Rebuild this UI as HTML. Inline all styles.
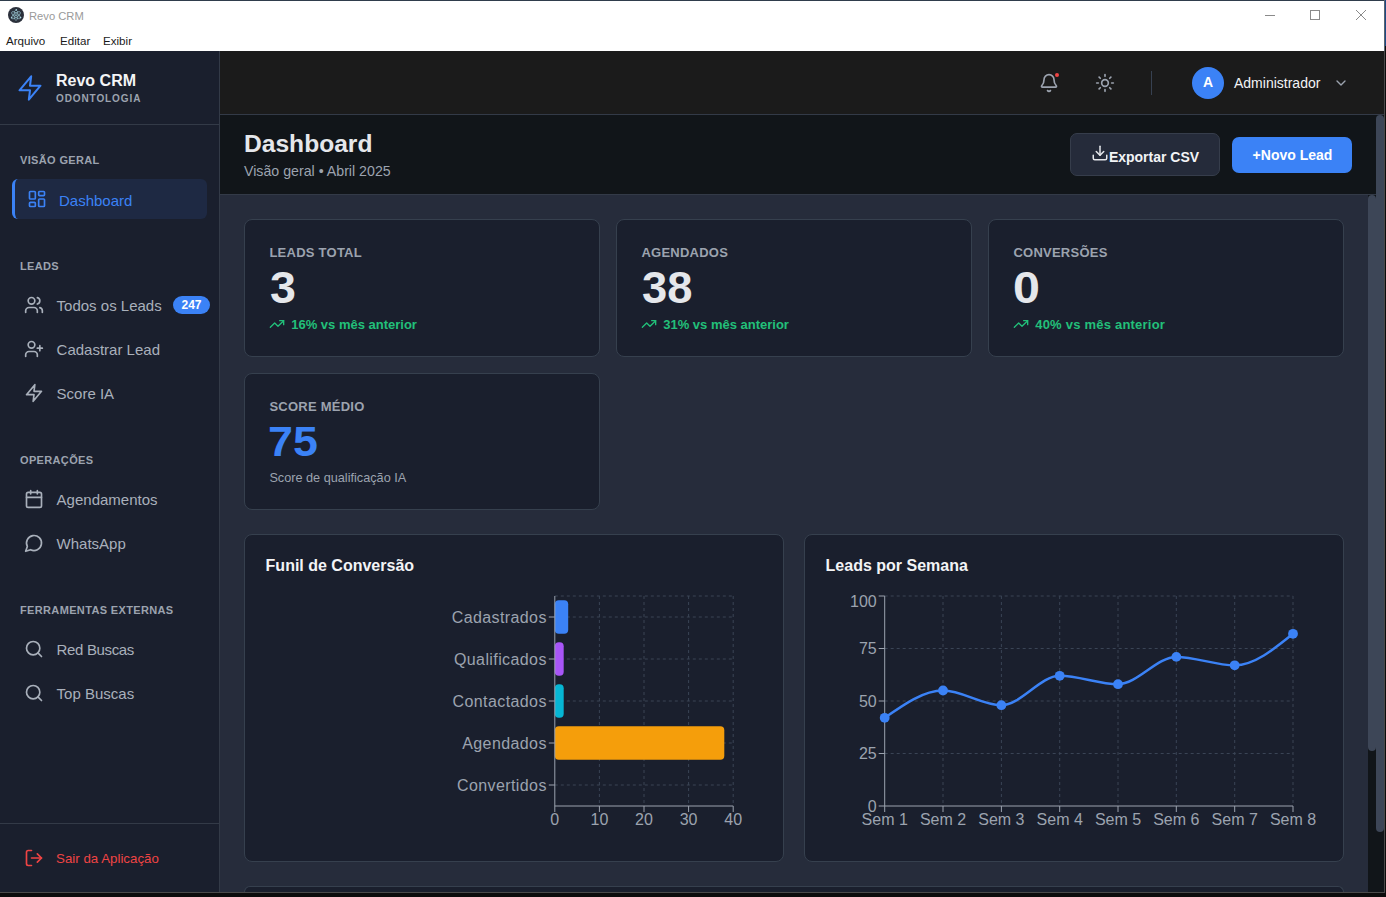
<!DOCTYPE html>
<html><head><meta charset="utf-8"><title>Revo CRM</title>
<style>
html,body{margin:0;padding:0;width:1386px;height:897px;overflow:hidden;background:#0c0c0c;font-family:"Liberation Sans", sans-serif;}
.t{position:absolute;white-space:nowrap;line-height:1;}
.r{position:absolute;}
.ic{position:absolute;overflow:visible;}
</style></head><body>
<div class="r" style="left:0px;top:0px;width:1386px;height:1px;background:#2f3d4c"></div>
<div class="r" style="left:0px;top:1px;width:1384px;height:50px;background:#ffffff"></div>
<div class="r" style="left:1384px;top:0px;width:1px;height:51px;background:#5a6470"></div>
<div class="r" style="left:1385px;top:0px;width:1px;height:46px;background:#1c4a85"></div>
<div class="r" style="left:1385px;top:46px;width:1px;height:5px;background:#0c0c0c"></div>
<svg class="ic" style="left:7px;top:6px" width="18" height="18" viewBox="0 0 18 18"><circle cx="9" cy="9" r="8" fill="#2b303b"/><g fill="none" stroke="#8fb8c4" stroke-width="0.75"><ellipse cx="9" cy="9.2" rx="5.2" ry="2" transform="rotate(35 9 9.2)"/><ellipse cx="9" cy="9.2" rx="5.2" ry="2" transform="rotate(-35 9 9.2)"/><ellipse cx="9" cy="9.2" rx="5.2" ry="2" transform="rotate(90 9 9.2)"/></g><circle cx="9" cy="9.2" r="0.9" fill="#8fb8c4"/><circle cx="9.3" cy="3.8" r="0.8" fill="#b0dde8"/><circle cx="4.6" cy="11.8" r="0.8" fill="#b0dde8"/><circle cx="13.6" cy="11.6" r="0.8" fill="#b0dde8"/></svg>
<div class="t" style="left:29px;top:10.92px;font-size:11.2px;color:#9a9a9a;">Revo CRM</div>
<div class="t" style="left:6px;top:35.38px;font-size:11.6px;color:#1a1a1a;">Arquivo</div>
<div class="t" style="left:60px;top:35.38px;font-size:11.6px;color:#1a1a1a;">Editar</div>
<div class="t" style="left:103px;top:35.38px;font-size:11.6px;color:#1a1a1a;">Exibir</div>
<div class="r" style="left:1265px;top:15px;width:10px;height:1px;background:#8a8a8a"></div>
<div class="r" style="left:1310px;top:10px;width:10px;height:10px;border:1px solid #8a8a8a;box-sizing:border-box"></div>
<svg class="ic" style="left:1356px;top:10px" width="10" height="10" viewBox="0 0 10 10"><path d="M0 0L10 10M10 0L0 10" stroke="#8a8a8a" stroke-width="1"/></svg>
<div class="r" style="left:0px;top:51px;width:1384px;height:841px;background:#262c3b"></div>
<div class="r" style="left:1384px;top:51px;width:1px;height:842px;background:#4a4a4a"></div>
<div class="r" style="left:1385px;top:51px;width:1px;height:846px;background:#0c0c0c"></div>
<div class="r" style="left:0px;top:892px;width:1385px;height:1px;background:#4a4a4a"></div>
<div class="r" style="left:0px;top:893px;width:1386px;height:4px;background:#0c0c0c"></div>
<div class="r" style="left:0px;top:51px;width:219px;height:841px;background:#1a1f2d"></div>
<div class="r" style="left:219px;top:51px;width:1px;height:841px;background:#333a47"></div>
<div class="r" style="left:0px;top:124px;width:219px;height:1px;background:#333a47"></div>
<div class="r" style="left:0px;top:823px;width:219px;height:1px;background:#333a47"></div>
<svg class="ic" style="left:15.7px;top:73.8px" width="28" height="28" viewBox="0 0 24 24" fill="none" stroke="#3b82f6" stroke-width="1.75" stroke-linecap="round" stroke-linejoin="round"><polygon points="13 2 3 14 12 14 11 22 21 10 12 10 13 2"/></svg>
<div class="t" style="left:56px;top:73.46px;font-size:16px;color:#f3f4f6;font-weight:700;">Revo CRM</div>
<div class="t" style="left:56px;top:94.44px;font-size:10px;color:#9ca3af;font-weight:700;letter-spacing:0.9px;">ODONTOLOGIA</div>
<div class="t" style="left:20px;top:155.09px;font-size:11px;color:#9ca3af;font-weight:700;letter-spacing:0.35px;">VISÃO GERAL</div>
<div class="t" style="left:20px;top:260.69px;font-size:11px;color:#9ca3af;font-weight:700;letter-spacing:0.35px;">LEADS</div>
<div class="t" style="left:20px;top:454.69px;font-size:11px;color:#9ca3af;font-weight:700;letter-spacing:0.35px;">OPERAÇÕES</div>
<div class="t" style="left:20px;top:604.69px;font-size:11px;color:#9ca3af;font-weight:700;letter-spacing:0.35px;">FERRAMENTAS EXTERNAS</div>
<div class="r" style="left:12px;top:179px;width:195px;height:40px;background:#1e2943;border-radius:6px;border-left:3px solid #3b82f6;box-sizing:border-box"></div>
<svg class="ic" style="left:27px;top:189.3px" width="20" height="20" viewBox="0 0 24 24" fill="none" stroke="#3b82f6" stroke-width="2" stroke-linecap="round" stroke-linejoin="round"><rect width="7" height="9" x="3" y="3" rx="1"/><rect width="7" height="5" x="14" y="3" rx="1"/><rect width="7" height="9" x="14" y="12" rx="1"/><rect width="7" height="5" x="3" y="16" rx="1"/></svg>
<div class="t" style="left:59px;top:192.60px;font-size:15px;color:#3b82f6;">Dashboard</div>
<svg class="ic" style="left:24px;top:294.7px" width="20" height="20" viewBox="0 0 24 24" fill="none" stroke="#a9b0bb" stroke-width="2" stroke-linecap="round" stroke-linejoin="round"><path d="M16 21v-2a4 4 0 0 0-4-4H6a4 4 0 0 0-4 4v2"/><circle cx="9" cy="7" r="4"/><path d="M22 21v-2a4 4 0 0 0-3-3.87"/><path d="M16 3.13a4 4 0 0 1 0 7.75"/></svg>
<div class="t" style="left:56.6px;top:298.30px;font-size:15px;color:#a9b0bb;">Todos os Leads</div>
<svg class="ic" style="left:24px;top:338.9px" width="20" height="20" viewBox="0 0 24 24" fill="none" stroke="#a9b0bb" stroke-width="2" stroke-linecap="round" stroke-linejoin="round"><path d="M16 21v-2a4 4 0 0 0-4-4H6a4 4 0 0 0-4 4v2"/><circle cx="9" cy="7" r="4"/><line x1="19" x2="19" y1="8" y2="14"/><line x1="22" x2="16" y1="11" y2="11"/></svg>
<div class="t" style="left:56.6px;top:342.30px;font-size:15px;color:#a9b0bb;">Cadastrar Lead</div>
<svg class="ic" style="left:24px;top:383.4px" width="20" height="20" viewBox="0 0 24 24" fill="none" stroke="#a9b0bb" stroke-width="2" stroke-linecap="round" stroke-linejoin="round"><polygon points="13 2 3 14 12 14 11 22 21 10 12 10 13 2"/></svg>
<div class="t" style="left:56.6px;top:386.30px;font-size:15px;color:#a9b0bb;">Score IA</div>
<svg class="ic" style="left:24px;top:489.2px" width="20" height="20" viewBox="0 0 24 24" fill="none" stroke="#a9b0bb" stroke-width="2" stroke-linecap="round" stroke-linejoin="round"><path d="M8 2v4"/><path d="M16 2v4"/><rect width="18" height="18" x="3" y="4" rx="2"/><path d="M3 10h18"/></svg>
<div class="t" style="left:56.6px;top:492.30px;font-size:15px;color:#a9b0bb;">Agendamentos</div>
<svg class="ic" style="left:24px;top:533.0px" width="20" height="20" viewBox="0 0 24 24" fill="none" stroke="#a9b0bb" stroke-width="2" stroke-linecap="round" stroke-linejoin="round"><path d="M7.9 20A9 9 0 1 0 4 16.1L2 22Z"/></svg>
<div class="t" style="left:56.6px;top:536.30px;font-size:15px;color:#a9b0bb;">WhatsApp</div>
<svg class="ic" style="left:24px;top:639.2px" width="20" height="20" viewBox="0 0 24 24" fill="none" stroke="#a9b0bb" stroke-width="2" stroke-linecap="round" stroke-linejoin="round"><circle cx="11" cy="11" r="8"/><path d="m21 21-4.3-4.3"/></svg>
<div class="t" style="left:56.6px;top:642.30px;font-size:15px;color:#a9b0bb;letter-spacing:-0.35px;">Red Buscas</div>
<svg class="ic" style="left:24px;top:683.2px" width="20" height="20" viewBox="0 0 24 24" fill="none" stroke="#a9b0bb" stroke-width="2" stroke-linecap="round" stroke-linejoin="round"><circle cx="11" cy="11" r="8"/><path d="m21 21-4.3-4.3"/></svg>
<div class="t" style="left:56.6px;top:686.30px;font-size:15px;color:#a9b0bb;">Top Buscas</div>
<div class="r" style="left:173px;top:296px;width:37px;height:18px;background:#3b82f6;border-radius:9px"></div>
<div class="t" style="left:191.5px;top:298.84px;font-size:12px;color:#ffffff;font-weight:700;transform:translateX(-50%);">247</div>
<svg class="ic" style="left:24px;top:847.9px" width="20" height="20" viewBox="0 0 24 24" fill="none" stroke="#ef4444" stroke-width="2" stroke-linecap="round" stroke-linejoin="round"><path d="M9 21H5a2 2 0 0 1-2-2V5a2 2 0 0 1 2-2h4"/><polyline points="16 17 21 12 16 7"/><line x1="21" x2="9" y1="12" y2="12"/></svg>
<div class="t" style="left:56.1px;top:851.74px;font-size:13.3px;color:#ef4444;">Sair da Aplicação</div>
<div class="r" style="left:220px;top:51px;width:1164px;height:63px;background:#1b1b1b"></div>
<div class="r" style="left:220px;top:114px;width:1164px;height:1px;background:#333a47"></div>
<svg class="ic" style="left:1039px;top:72.7px" width="20" height="20" viewBox="0 0 24 24" fill="none" stroke="#9ca3af" stroke-width="2" stroke-linecap="round" stroke-linejoin="round"><path d="M10.268 21a2 2 0 0 0 3.464 0"/><path d="M3.262 15.326A1 1 0 0 0 4 17h16a1 1 0 0 0 .74-1.673C19.41 13.956 18 12.499 18 8A6 6 0 0 0 6 8c0 4.499-1.411 5.956-2.738 7.326"/></svg>
<div class="r" style="left:1055px;top:73px;width:4.2px;height:4.2px;background:#ef4444;border-radius:50%"></div>
<svg class="ic" style="left:1095px;top:73px" width="20" height="20" viewBox="0 0 24 24" fill="none" stroke="#9ca3af" stroke-width="2" stroke-linecap="round" stroke-linejoin="round"><circle cx="12" cy="12" r="4"/><path d="M12 2v2"/><path d="M12 20v2"/><path d="m4.93 4.93 1.41 1.41"/><path d="m17.66 17.66 1.41 1.41"/><path d="M2 12h2"/><path d="M20 12h2"/><path d="m6.34 17.66-1.41 1.41"/><path d="m19.07 4.93-1.41 1.41"/></svg>
<div class="r" style="left:1151px;top:71px;width:1px;height:24px;background:#374151"></div>
<div class="r" style="left:1192px;top:67px;width:32px;height:32px;background:#3b82f6;border-radius:50%"></div>
<div class="t" style="left:1208px;top:75.15px;font-size:14px;color:#ffffff;font-weight:700;transform:translateX(-50%);">A</div>
<div class="t" style="left:1234px;top:76.15px;font-size:14px;color:#f3f4f6;">Administrador</div>
<svg class="ic" style="left:1333px;top:75px" width="16" height="16" viewBox="0 0 24 24" fill="none" stroke="#9ca3af" stroke-width="2" stroke-linecap="round" stroke-linejoin="round"><path d="m6 9 6 6 6-6"/></svg>
<div class="r" style="left:220px;top:115px;width:1156px;height:79px;background:#111519"></div>
<div class="r" style="left:220px;top:194px;width:1156px;height:1px;background:#333a47"></div>
<div class="t" style="left:244px;top:131.58px;font-size:24.6px;color:#e5e7eb;font-weight:700;">Dashboard</div>
<div class="t" style="left:244px;top:163.88px;font-size:14.2px;color:#9ca3af;">Visão geral • Abril 2025</div>
<div class="r" style="left:1070px;top:133px;width:150px;height:43px;background:#252b3a;border:1px solid #363d4b;border-radius:7px;box-sizing:border-box"></div>
<svg class="ic" style="left:1090.9px;top:143.7px" width="18" height="18" viewBox="0 0 24 24" fill="none" stroke="#e5e7eb" stroke-width="2" stroke-linecap="round" stroke-linejoin="round"><path d="M21 15v4a2 2 0 0 1-2 2H5a2 2 0 0 1-2-2v-4"/><polyline points="7 10 12 15 17 10"/><line x1="12" x2="12" y1="15" y2="3"/></svg>
<div class="t" style="left:1108.9px;top:149.95px;font-size:14px;color:#f3f4f6;font-weight:700;">Exportar CSV</div>
<div class="r" style="left:1232px;top:137px;width:120px;height:36px;background:#3b82f6;border-radius:7px"></div>
<div class="t" style="left:1252.6px;top:148.15px;font-size:14px;color:#ffffff;font-weight:700;">+Novo Lead</div>
<div class="r" style="left:1368px;top:195px;width:8px;height:697px;background:#111519"></div>
<div class="r" style="left:1368px;top:195px;width:8px;height:556px;background:#3d4657;border-radius:4px"></div>
<div class="r" style="left:1376px;top:115px;width:8px;height:777px;background:#111519"></div>
<div class="r" style="left:1376px;top:115px;width:8px;height:717px;background:#3d4657;border-radius:4px"></div>
<div class="r" style="left:244px;top:219px;width:356px;height:138px;background:#1a1f2d;border:1px solid #36404e;border-radius:8px;box-sizing:border-box"></div>
<div class="t" style="left:269.4px;top:246.00px;font-size:13px;color:#9ca3af;font-weight:700;letter-spacing:0.25px;">LEADS TOTAL</div>
<div class="t" style="left:269.5px;top:265.75px;font-size:44px;color:#e5e7eb;font-weight:700;transform:scaleX(1.06);transform-origin:0 0;">3</div>
<svg class="ic" style="left:269px;top:316px" width="16" height="16" viewBox="0 0 24 24" fill="none" stroke="#22c07a" stroke-width="2" stroke-linecap="round" stroke-linejoin="round"><polyline points="22 7 13.5 15.5 8.5 10.5 2 17"/><polyline points="16 7 22 7 22 13"/></svg>
<div class="t" style="left:291.2px;top:318.00px;font-size:13px;color:#22c07a;font-weight:700;">16% vs mês anterior</div>
<div class="r" style="left:616px;top:219px;width:356px;height:138px;background:#1a1f2d;border:1px solid #36404e;border-radius:8px;box-sizing:border-box"></div>
<div class="t" style="left:641.4px;top:246.00px;font-size:13px;color:#9ca3af;font-weight:700;letter-spacing:0.25px;">AGENDADOS</div>
<div class="t" style="left:641.5px;top:265.75px;font-size:44px;color:#e5e7eb;font-weight:700;transform:scaleX(1.03);transform-origin:0 0;">38</div>
<svg class="ic" style="left:641px;top:316px" width="16" height="16" viewBox="0 0 24 24" fill="none" stroke="#22c07a" stroke-width="2" stroke-linecap="round" stroke-linejoin="round"><polyline points="22 7 13.5 15.5 8.5 10.5 2 17"/><polyline points="16 7 22 7 22 13"/></svg>
<div class="t" style="left:663.2px;top:318.00px;font-size:13px;color:#22c07a;font-weight:700;">31% vs mês anterior</div>
<div class="r" style="left:988px;top:219px;width:356px;height:138px;background:#1a1f2d;border:1px solid #36404e;border-radius:8px;box-sizing:border-box"></div>
<div class="t" style="left:1013.4px;top:246.00px;font-size:13px;color:#9ca3af;font-weight:700;letter-spacing:0.25px;">CONVERSÕES</div>
<div class="t" style="left:1012.9px;top:265.75px;font-size:44px;color:#e5e7eb;font-weight:700;transform:scaleX(1.1);transform-origin:0 0;">0</div>
<svg class="ic" style="left:1013px;top:316px" width="16" height="16" viewBox="0 0 24 24" fill="none" stroke="#22c07a" stroke-width="2" stroke-linecap="round" stroke-linejoin="round"><polyline points="22 7 13.5 15.5 8.5 10.5 2 17"/><polyline points="16 7 22 7 22 13"/></svg>
<div class="t" style="left:1035.2px;top:318.00px;font-size:13px;color:#22c07a;font-weight:700;letter-spacing:0.22px;">40% vs mês anterior</div>
<div class="r" style="left:244px;top:373px;width:356px;height:137px;background:#1a1f2d;border:1px solid #36404e;border-radius:8px;box-sizing:border-box"></div>
<div class="t" style="left:269.4px;top:399.80px;font-size:13px;color:#9ca3af;font-weight:700;letter-spacing:0.25px;">SCORE MÉDIO</div>
<div class="t" style="left:268.4px;top:420.95px;font-size:42px;color:#3b82f6;font-weight:700;transform:scaleX(1.065);transform-origin:0 0;">75</div>
<div class="t" style="left:269.4px;top:471.85px;font-size:12.7px;color:#9ca3af;">Score de qualificação IA</div>
<div class="r" style="left:244px;top:534px;width:540px;height:328px;background:#1a1f2d;border:1px solid #36404e;border-radius:8px;box-sizing:border-box"></div>
<div class="r" style="left:804px;top:534px;width:540px;height:328px;background:#1a1f2d;border:1px solid #36404e;border-radius:8px;box-sizing:border-box"></div>
<div class="r" style="left:244px;top:886px;width:1100px;height:6px;background:#1a1f2d;border:1px solid #36404e;border-bottom:none;border-radius:8px 8px 0 0;box-sizing:border-box"></div>
<div class="t" style="left:265.6px;top:558.46px;font-size:16px;color:#f3f4f6;font-weight:700;">Funil de Conversão</div>
<div class="t" style="left:825.6px;top:558.46px;font-size:16px;color:#f3f4f6;font-weight:700;">Leads por Semana</div>
<svg class="ic" style="left:0;top:0" width="1386" height="897" viewBox="0 0 1386 897" font-family="Liberation Sans, sans-serif"><line x1="599.4" y1="596" x2="599.4" y2="806" stroke="#3a4455" stroke-dasharray="3 3"/><line x1="644.0" y1="596" x2="644.0" y2="806" stroke="#3a4455" stroke-dasharray="3 3"/><line x1="688.6" y1="596" x2="688.6" y2="806" stroke="#3a4455" stroke-dasharray="3 3"/><line x1="733.2" y1="596" x2="733.2" y2="806" stroke="#3a4455" stroke-dasharray="3 3"/><line x1="554.8" y1="596" x2="733.2" y2="596" stroke="#3a4455" stroke-dasharray="3 3"/><line x1="554.8" y1="617" x2="733.2" y2="617" stroke="#3a4455" stroke-dasharray="3 3"/><line x1="554.8" y1="659" x2="733.2" y2="659" stroke="#3a4455" stroke-dasharray="3 3"/><line x1="554.8" y1="701" x2="733.2" y2="701" stroke="#3a4455" stroke-dasharray="3 3"/><line x1="554.8" y1="743" x2="733.2" y2="743" stroke="#3a4455" stroke-dasharray="3 3"/><line x1="554.8" y1="785" x2="733.2" y2="785" stroke="#3a4455" stroke-dasharray="3 3"/><rect x="554.8" y="600.2" width="13.4" height="33.6" rx="4" fill="#3b82f6"/><rect x="554.8" y="642.2" width="8.9" height="33.6" rx="4" fill="#a855f7"/><rect x="554.8" y="684.2" width="8.9" height="33.6" rx="4" fill="#06b6d4"/><rect x="554.8" y="726.2" width="169.5" height="33.6" rx="4" fill="#f59e0b"/><line x1="554.8" y1="596" x2="554.8" y2="806" stroke="#9ca3af"/><line x1="554.8" y1="806" x2="733.2" y2="806" stroke="#9ca3af"/><line x1="548.8" y1="617" x2="554.8" y2="617" stroke="#9ca3af"/><text x="546.8" y="622.7" text-anchor="end" fill="#9ca3af" font-size="16" letter-spacing="0.4">Cadastrados</text><line x1="548.8" y1="659" x2="554.8" y2="659" stroke="#9ca3af"/><text x="546.8" y="664.7" text-anchor="end" fill="#9ca3af" font-size="16" letter-spacing="0.4">Qualificados</text><line x1="548.8" y1="701" x2="554.8" y2="701" stroke="#9ca3af"/><text x="546.8" y="706.7" text-anchor="end" fill="#9ca3af" font-size="16" letter-spacing="0.4">Contactados</text><line x1="548.8" y1="743" x2="554.8" y2="743" stroke="#9ca3af"/><text x="546.8" y="748.7" text-anchor="end" fill="#9ca3af" font-size="16" letter-spacing="0.4">Agendados</text><line x1="548.8" y1="785" x2="554.8" y2="785" stroke="#9ca3af"/><text x="546.8" y="790.7" text-anchor="end" fill="#9ca3af" font-size="16" letter-spacing="0.4">Convertidos</text><line x1="554.8" y1="806" x2="554.8" y2="812" stroke="#9ca3af"/><text x="554.8" y="825.4" text-anchor="middle" fill="#9ca3af" font-size="16">0</text><line x1="599.4" y1="806" x2="599.4" y2="812" stroke="#9ca3af"/><text x="599.4" y="825.4" text-anchor="middle" fill="#9ca3af" font-size="16">10</text><line x1="644.0" y1="806" x2="644.0" y2="812" stroke="#9ca3af"/><text x="644.0" y="825.4" text-anchor="middle" fill="#9ca3af" font-size="16">20</text><line x1="688.6" y1="806" x2="688.6" y2="812" stroke="#9ca3af"/><text x="688.6" y="825.4" text-anchor="middle" fill="#9ca3af" font-size="16">30</text><line x1="733.2" y1="806" x2="733.2" y2="812" stroke="#9ca3af"/><text x="733.2" y="825.4" text-anchor="middle" fill="#9ca3af" font-size="16">40</text><line x1="943.0" y1="596" x2="943.0" y2="806" stroke="#3a4455" stroke-dasharray="3 3"/><line x1="1001.4" y1="596" x2="1001.4" y2="806" stroke="#3a4455" stroke-dasharray="3 3"/><line x1="1059.7" y1="596" x2="1059.7" y2="806" stroke="#3a4455" stroke-dasharray="3 3"/><line x1="1118.0" y1="596" x2="1118.0" y2="806" stroke="#3a4455" stroke-dasharray="3 3"/><line x1="1176.3" y1="596" x2="1176.3" y2="806" stroke="#3a4455" stroke-dasharray="3 3"/><line x1="1234.7" y1="596" x2="1234.7" y2="806" stroke="#3a4455" stroke-dasharray="3 3"/><line x1="1293.0" y1="596" x2="1293.0" y2="806" stroke="#3a4455" stroke-dasharray="3 3"/><line x1="884.7" y1="753.5" x2="1293" y2="753.5" stroke="#3a4455" stroke-dasharray="3 3"/><line x1="884.7" y1="701.0" x2="1293" y2="701.0" stroke="#3a4455" stroke-dasharray="3 3"/><line x1="884.7" y1="648.5" x2="1293" y2="648.5" stroke="#3a4455" stroke-dasharray="3 3"/><line x1="884.7" y1="596.0" x2="1293" y2="596.0" stroke="#3a4455" stroke-dasharray="3 3"/><line x1="884.7" y1="596" x2="884.7" y2="806" stroke="#9ca3af"/><line x1="884.7" y1="806" x2="1293" y2="806" stroke="#9ca3af"/><line x1="878.7" y1="806.0" x2="884.7" y2="806.0" stroke="#9ca3af"/><text x="876.7" y="811.7" text-anchor="end" fill="#9ca3af" font-size="16">0</text><line x1="878.7" y1="753.5" x2="884.7" y2="753.5" stroke="#9ca3af"/><text x="876.7" y="759.2" text-anchor="end" fill="#9ca3af" font-size="16">25</text><line x1="878.7" y1="701.0" x2="884.7" y2="701.0" stroke="#9ca3af"/><text x="876.7" y="706.7" text-anchor="end" fill="#9ca3af" font-size="16">50</text><line x1="878.7" y1="648.5" x2="884.7" y2="648.5" stroke="#9ca3af"/><text x="876.7" y="654.2" text-anchor="end" fill="#9ca3af" font-size="16">75</text><line x1="878.7" y1="596.0" x2="884.7" y2="596.0" stroke="#9ca3af"/><text x="876.7" y="607.1" text-anchor="end" fill="#9ca3af" font-size="16">100</text><line x1="884.7" y1="806" x2="884.7" y2="812" stroke="#9ca3af"/><text x="884.7" y="825.4" text-anchor="middle" fill="#9ca3af" font-size="16">Sem 1</text><line x1="943.0" y1="806" x2="943.0" y2="812" stroke="#9ca3af"/><text x="943.0" y="825.4" text-anchor="middle" fill="#9ca3af" font-size="16">Sem 2</text><line x1="1001.4" y1="806" x2="1001.4" y2="812" stroke="#9ca3af"/><text x="1001.4" y="825.4" text-anchor="middle" fill="#9ca3af" font-size="16">Sem 3</text><line x1="1059.7" y1="806" x2="1059.7" y2="812" stroke="#9ca3af"/><text x="1059.7" y="825.4" text-anchor="middle" fill="#9ca3af" font-size="16">Sem 4</text><line x1="1118.0" y1="806" x2="1118.0" y2="812" stroke="#9ca3af"/><text x="1118.0" y="825.4" text-anchor="middle" fill="#9ca3af" font-size="16">Sem 5</text><line x1="1176.3" y1="806" x2="1176.3" y2="812" stroke="#9ca3af"/><text x="1176.3" y="825.4" text-anchor="middle" fill="#9ca3af" font-size="16">Sem 6</text><line x1="1234.7" y1="806" x2="1234.7" y2="812" stroke="#9ca3af"/><text x="1234.7" y="825.4" text-anchor="middle" fill="#9ca3af" font-size="16">Sem 7</text><line x1="1293.0" y1="806" x2="1293.0" y2="812" stroke="#9ca3af"/><text x="1293.0" y="825.4" text-anchor="middle" fill="#9ca3af" font-size="16">Sem 8</text><path d="M884.70,717.80C904.14,704.15,923.59,690.50,943.03,690.50C962.47,690.50,981.91,705.20,1001.36,705.20C1020.80,705.20,1040.24,675.80,1059.69,675.80C1079.13,675.80,1098.57,684.20,1118.01,684.20C1137.46,684.20,1156.90,656.90,1176.34,656.90C1195.79,656.90,1215.23,665.30,1234.67,665.30C1254.11,665.30,1273.56,649.55,1293.00,633.80" fill="none" stroke="#3b82f6" stroke-width="2.5"/><circle cx="884.70" cy="717.80" r="4.9" fill="#3b82f6"/><circle cx="943.03" cy="690.50" r="4.9" fill="#3b82f6"/><circle cx="1001.36" cy="705.20" r="4.9" fill="#3b82f6"/><circle cx="1059.69" cy="675.80" r="4.9" fill="#3b82f6"/><circle cx="1118.01" cy="684.20" r="4.9" fill="#3b82f6"/><circle cx="1176.34" cy="656.90" r="4.9" fill="#3b82f6"/><circle cx="1234.67" cy="665.30" r="4.9" fill="#3b82f6"/><circle cx="1293.00" cy="633.80" r="4.9" fill="#3b82f6"/></svg>
</body></html>
